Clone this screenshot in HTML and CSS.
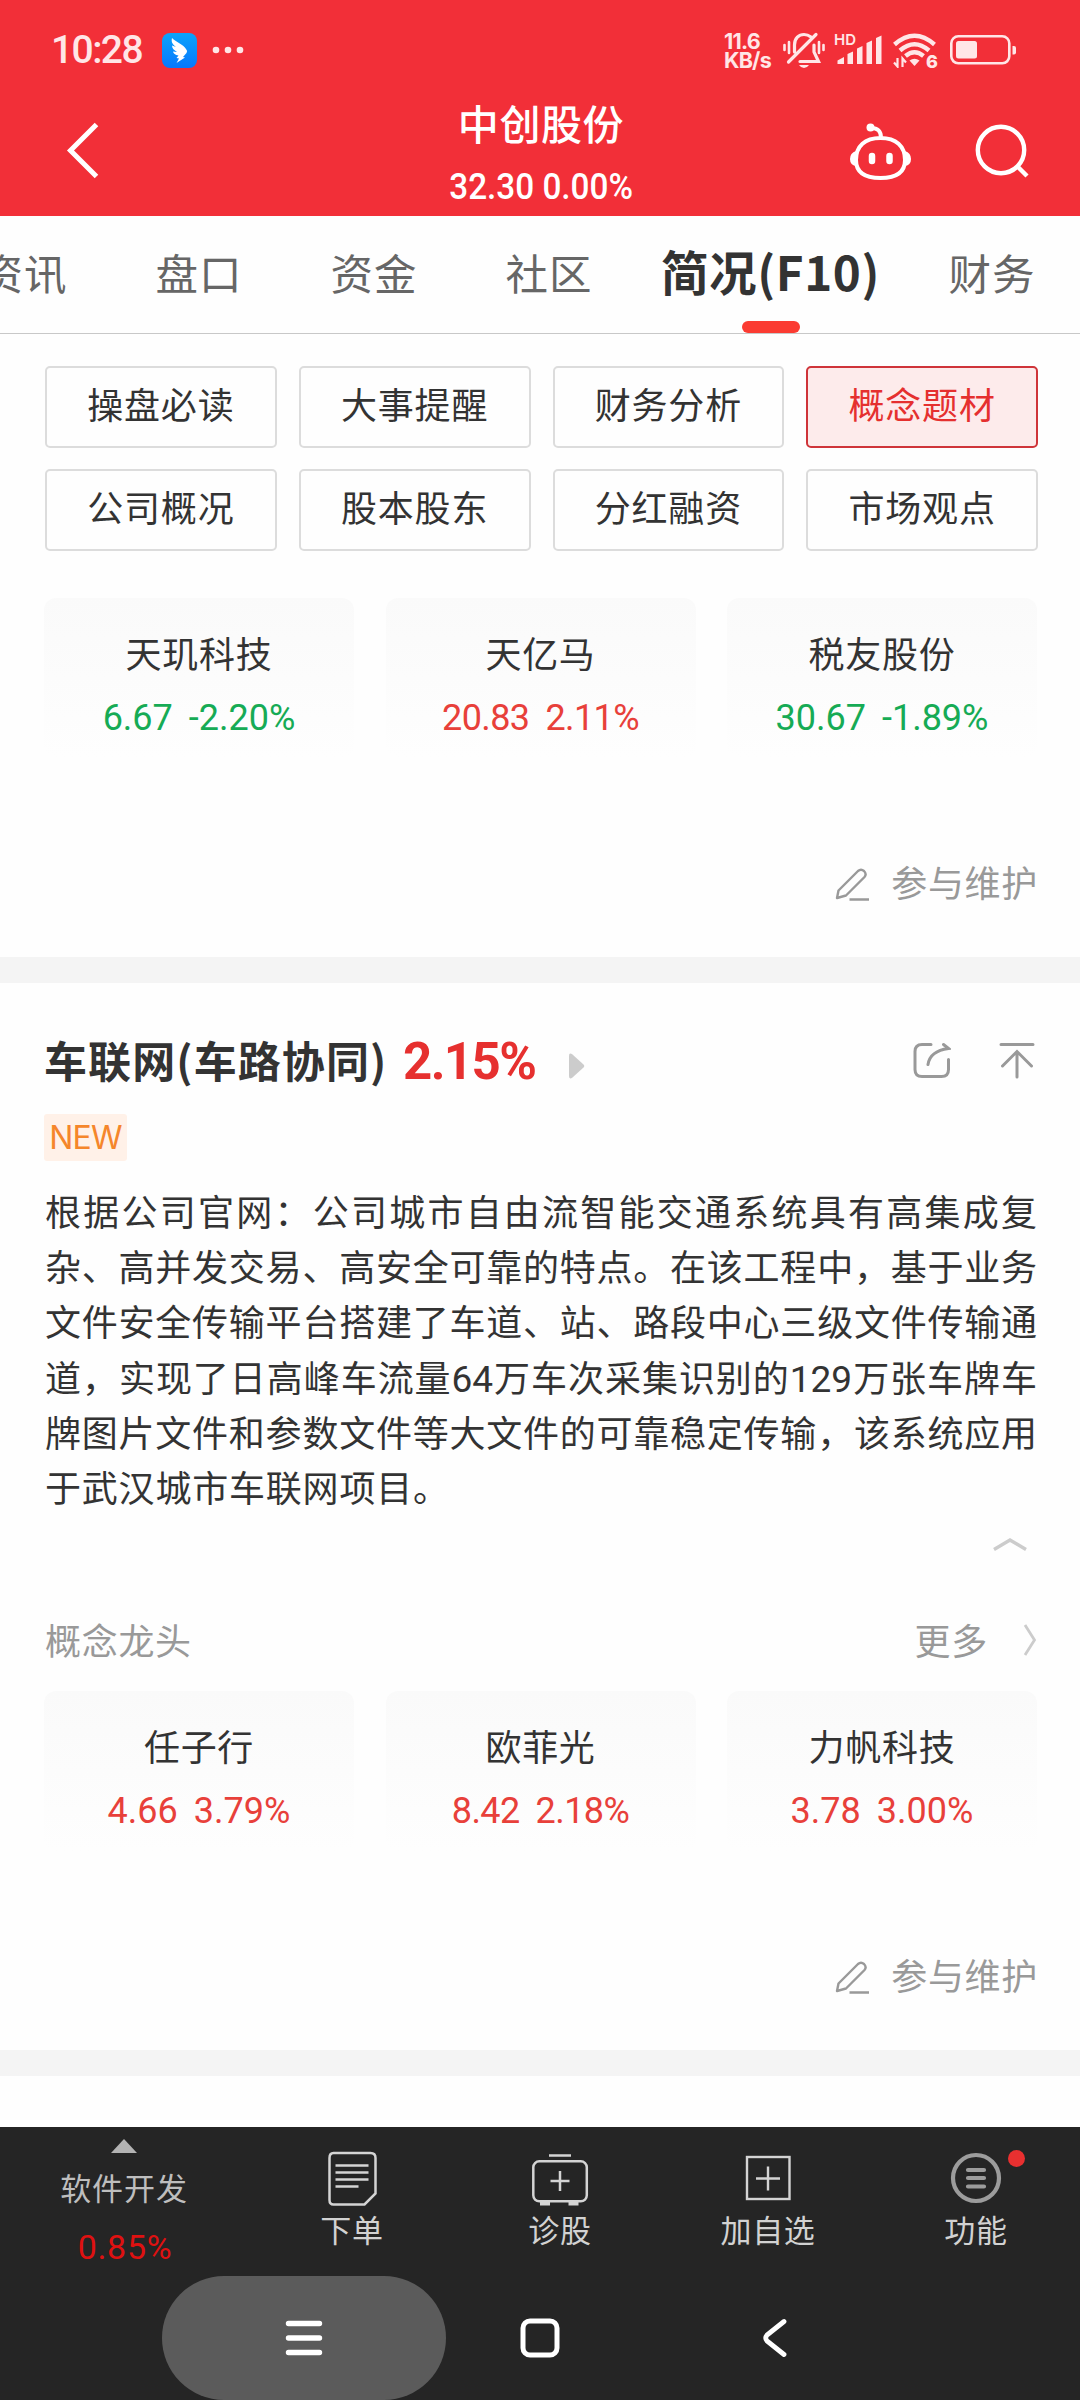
FILE: index.html
```html
<!DOCTYPE html>
<html lang="zh-CN">
<head>
<meta charset="utf-8">
<title>中创股份</title>
<link rel="stylesheet" href="styles.css">
</head>
<body>
<div class="app">
  <header class="header">
    <div class="status">
      <div class="status-left">
        <span class="clock">10:28</span>
        <svg class="app-icon" width="35" height="35" viewBox="0 0 35 35"><defs><linearGradient id="blue" x1="0" y1="0" x2="0" y2="1"><stop offset="0" stop-color="#0aa4fb"/><stop offset="1" stop-color="#0877fd"/></linearGradient></defs><rect width="35" height="35" rx="8" fill="url(#blue)"/><path d="M10 5C14 9 21 11 24 16Q26 18 24.500 20L21 24L23 24.500L14.500 30L17 25.500L14.500 25L16.500 22.500C13 22 11.500 20.500 11 18.500L15 19C12 17 10 15.500 10 12.500L14 14C10.500 11.500 9 9 10 5Z" fill="#fff"/></svg>
        <svg class="dots" width="32" height="8" viewBox="0 0 32 8" fill="#ffe6e7"><circle cx="4" cy="4" r="3.300"/><circle cx="16" cy="4" r="3.300"/><circle cx="28" cy="4" r="3.300"/></svg>
      </div>
      <div class="status-right">
        <div class="speed"><span>11.6</span><span>KB/s</span></div>
        <svg class="bell" width="42" height="36" viewBox="0 0 42 36" fill="none" stroke="#ffe6e7" stroke-width="3.200" stroke-linecap="round"><path d="M11.500 20V13C11.500 6 16 2.500 21 2.500C24 2.500 26 3.500 28 5M31 13V20L35.500 29.500H17M5.500 30L33 2.500"/><path d="M1.500 13V18M6 10V21M40.500 13V18M36 10V21" stroke-width="2.600"/><path d="M16 33H26Q24 36 21 36Q18 36 16 33Z" fill="#ffe6e7" stroke="none"/></svg>
        <div class="signal"><span class="hd">HD</span><svg width="46" height="30" viewBox="0 0 46 30" fill="#ffe6e7"><path d="M1.500 29V25.500L8 22V29ZM11.500 29V19L17 16.500V29ZM21 29V13.500L26.500 11V29ZM30.500 29V8L36 5.500V29ZM40 29V3L45.500 0.500V29Z"/></svg></div>
        <div class="wifi"><svg width="45" height="35" viewBox="0 0 45 35" fill="none" stroke="#ffe6e7" stroke-width="4.400"><path d="M1.500 11.500Q21.500 -6 41.500 11.500M7 17.500Q21.500 5 36 17.500M12.500 23Q21.500 15.500 30.500 23"/><path d="M16.500 27.500Q21.500 24 26.500 27.500L21.500 33Z" fill="#ffe6e7" stroke="none"/><path d="M4.500 25V33.500L1 29.500M9.500 34V25.500L13 29.500" stroke-width="2.200"/></svg><span class="wifi-gen">6</span></div>
        <svg class="battery" width="67" height="30" viewBox="0 0 67 30"><rect x="1.300" y="1.300" width="58" height="27" rx="7" fill="none" stroke="#ffe6e7" stroke-width="2.600"/><rect x="6" y="6" width="21" height="17.500" rx="2.500" fill="#ffe6e7"/><path d="M62.500 11H64Q66 11 66 13V17.500Q66 19.500 64 19.500H62.500Z" fill="#ffe6e7"/></svg>
      </div>
    </div>
    <div class="nav">
      <svg class="back" width="36" height="60" viewBox="0 0 36 60" fill="none" stroke="#fff" stroke-width="5"><path d="M31.500 4.500L5.500 30.500L31.500 56.500"/></svg>
      <div class="headline"><div class="name">中创股份</div><div class="price">32.30 0.00%</div></div>
      <div class="nav-icons">
        <svg width="62" height="58" viewBox="0 0 62 58" fill="none" stroke="#fff" stroke-width="4"><path d="M30.500 15C46 15 55 23 55 37C55 50 46 55 30.500 55C15 55 6 50 6 37C6 23 15 15 30.500 15ZM31 15C31 8 28 5 21 5"/><circle cx="20.500" cy="4.500" r="4" fill="#fff" stroke="none"/><path d="M6 28Q0 30 0 36Q0 42 6 43ZM55 28Q61 30 61 36Q61 42 55 43Z" fill="#fff" stroke="none"/><path d="M22 33V38M39.500 33V38" stroke-width="6.500" stroke-linecap="round"/></svg>
        <svg width="56" height="58" viewBox="0 0 56 58" fill="none" stroke="#fff" stroke-width="4.400"><circle cx="27" cy="28" r="23.200"/><path d="M44 45L53 54"/></svg>
      </div>
    </div>
  </header>

  <nav class="tabs">
    <span class="tab">资讯</span><span class="tab">盘口</span><span class="tab">资金</span><span class="tab">社区</span><span class="tab active">简况(F10)</span><span class="tab">财务</span>
  </nav>

  <main class="content">
    <div class="menu">
      <span>操盘必读</span><span>大事提醒</span><span>财务分析</span><span class="on">概念题材</span>
      <span>公司概况</span><span>股本股东</span><span>分红融资</span><span>市场观点</span>
    </div>
    <div class="cards">
      <div class="card"><div>天玑科技</div><div class="quote down">6.67<i></i>-2.20%</div></div>
      <div class="card"><div>天亿马</div><div class="quote up narrow">20.83<i></i>2.11%</div></div>
      <div class="card"><div>税友股份</div><div class="quote down">30.67<i></i>-1.89%</div></div>
    </div>
    <div class="edit"><svg width="34" height="34" viewBox="0 0 34 34" fill="none" stroke="#999" stroke-width="2.400" stroke-linejoin="round"><path d="M2 30L3.500 22.500L23 3Q26 0.500 29 3Q32 6 29.500 9L11 27.500ZM14.500 31.500H34"/></svg><span>参与维护</span></div>
    <div class="divider"></div>

    <section class="topic">
      <div class="topic-head">
        <h2>车联网(车路协同)</h2><strong>2.15%</strong>
        <svg class="play" width="16" height="26" viewBox="0 0 16 26"><path d="M0 3Q0 -1 3.500 1.500L14.500 11.500Q16 13 14.500 14.500L3.500 24.500Q0 27 0 23Z" fill="#ccc"/></svg>
        <div class="topic-tools">
          <svg width="38" height="38" viewBox="0 0 38 38" fill="none" stroke="#999" stroke-width="3" stroke-linecap="round"><path d="M18 2.500H9Q2 2.500 2 9.500V27.500Q2 34.500 9 34.500H28.500Q35.500 34.500 35.500 27.500V17.500M15 22.500Q17 9 35.500 6.500L30.500 2.500"/></svg>
          <svg width="36" height="38" viewBox="0 0 36 38" fill="none" stroke="#999" stroke-width="3" stroke-linecap="round"><path d="M2 2.500H34M18 35V9.500M3.500 24L18 9.500L32.500 24"/></svg>
        </div>
      </div>
      <span class="badge">NEW</span>
      <div class="para">
        <p>根据公司官网：公司城市自由流智能交通系统具有高集成复</p>
        <p>杂、高并发交易、高安全可靠的特点。在该工程中，基于业务</p>
        <p>文件安全传输平台搭建了车道、站、路段中心三级文件传输通</p>
        <p>道，实现了日高峰车流量<span class="num">64</span>万车次采集识别的<span class="num">129</span>万张车牌车</p>
        <p>牌图片文件和参数文件等大文件的可靠稳定传输，该系统应用</p>
        <p>于武汉城市车联网项目。</p>
      </div>
      <svg class="fold" width="34" height="14" viewBox="0 0 34 14" fill="none" stroke="#ccc" stroke-width="3.400"><path d="M1 12.500L17 3L33 12.500"/></svg>
      <div class="leaders"><span>概念龙头</span><span class="more">更多</span><svg width="14" height="34" viewBox="0 0 14 34" fill="none" stroke="#ccc" stroke-width="2.800"><path d="M2 2L11.500 17L2 32"/></svg></div>
      <div class="cards">
        <div class="card"><div>任子行</div><div class="quote up">4.66<i></i>3.79%</div></div>
        <div class="card"><div>欧菲光</div><div class="quote up narrow">8.42<i></i>2.18%</div></div>
        <div class="card"><div>力帆科技</div><div class="quote up">3.78<i></i>3.00%</div></div>
      </div>
      <div class="edit"><svg width="34" height="34" viewBox="0 0 34 34" fill="none" stroke="#999" stroke-width="2.400" stroke-linejoin="round"><path d="M2 30L3.500 22.500L23 3Q26 0.500 29 3Q32 6 29.500 9L11 27.500ZM14.500 31.500H34"/></svg><span>参与维护</span></div>
      <div class="divider"></div>
    </section>
  </main>

  <footer class="footer">
    <div class="actions">
      <div class="sector"><svg width="26" height="14" viewBox="0 0 26 14"><path d="M13 0L26 14H0Z" fill="#b3b3b3"/></svg><span>软件开发</span><b>0.85%</b></div>
      <div class="action"><svg width="60" height="60" viewBox="0 0 60 60" fill="none" stroke="#d4d4d4" stroke-width="2.500"><path d="M11.500 3H48.500Q53.500 3 53.500 8V43.500L42.500 54.500H11.500Q7.500 54.500 7.500 50V8Q7.500 3 11.500 3ZM13.500 15.500H46.500M13.500 22.500H46.500M13.500 29.500H46.500M13.500 36.500H36.500"/></svg><span>下单</span></div>
      <div class="action"><svg width="60" height="60" viewBox="0 0 60 60" fill="none" stroke="#d4d4d4" stroke-width="2.500"><rect x="3.300" y="11.300" width="53.500" height="40" rx="6"/><path d="M19 5.500H41M30 21V41M20.500 31H39.500"/><path d="M10 53.500H20M38.500 53.500H48.500" stroke-width="4"/></svg><span>诊股</span></div>
      <div class="action"><svg width="60" height="60" viewBox="0 0 60 60" fill="none" stroke="#d4d4d4" stroke-width="2.400"><rect x="9" y="7" width="42.500" height="42"/><path d="M30 16.500V40.500M18 28.500H42"/></svg><span>加自选</span></div>
      <div class="action"><svg width="60" height="60" viewBox="0 0 60 60" fill="none" stroke="#9c9c9c" stroke-width="4.200"><circle cx="30" cy="28" r="23"/><path d="M22 20H38M22 28H38M22 36.500H38" stroke-linecap="round"/></svg><i class="dot"></i><span>功能</span></div>
    </div>
    <div class="system">
      <div class="pill"><svg width="38" height="36" viewBox="0 0 38 36" stroke="#fff" stroke-width="5.400" stroke-linecap="round"><path d="M3.500 3.500H34.500M3.500 18H34.500M3.500 32.500H34.500"/></svg></div>
      <svg class="home" width="40" height="40" viewBox="0 0 40 40" fill="none" stroke="#fff" stroke-width="5"><rect x="3" y="3" width="34" height="34" rx="7"/></svg>
      <svg class="sysback" width="26" height="40" viewBox="0 0 26 40" fill="none" stroke="#fff" stroke-width="4.800" stroke-linecap="round"><path d="M22 3.500L5 17Q2.500 20 5 23L22 36.500"/></svg>
    </div>
  </footer>
</div>
</body>
</html>
```
FILE: styles.css
```css
* { box-sizing: border-box; }
body { margin: 0; background: #fefefe; }
.app {
  width: 1080px;
  height: 2400px;
  display: flex;
  flex-direction: column;
  overflow: hidden;
  font-family: Roboto, "Noto Sans CJK SC", sans-serif;
  font-size: 36px;
  color: #333;
  white-space: nowrap;
}
svg { display: block; flex: none; }

.header { height: 216px; background: #f22f38; color: #fff; flex: none; }
.status { height: 98px; display: flex; justify-content: space-between; padding: 32px 63px 0 51px; color: #ffe6e7; }
.status-left { display: flex; align-items: center; height: 36px; }
.clock { width: 111px; font-size: 39px; font-weight: 500; letter-spacing: -1.6px; line-height: 36px; }
.dots { margin-left: 15px; }
.status-right { display: flex; height: 36px; align-items: center; }
.speed { width: 59px; padding-top: 1px; font: 700 21.5px/19px Inter, sans-serif; display: flex; flex-direction: column; letter-spacing: -0.8px; }
.signal { width: 46px; height: 36px; margin-left: 11px; display: flex; flex-direction: column; justify-content: flex-end; position: relative; }
.signal svg { margin-bottom: 3px; }
.hd { position: absolute; left: -2px; top: 0; font: 600 15px/16px Inter, sans-serif; }
.wifi { position: relative; margin-left: 11px; }
.wifi-gen { position: absolute; right: 0; bottom: 0; font: 800 18px/13px Inter, sans-serif; background: #f22f38; }
.battery { margin-left: 12px; }

.nav { height: 118px; display: flex; justify-content: space-between; padding: 0 50px 0 65px; }
.back { margin-top: 22px; }
.headline { padding-left: 131px; text-align: center; }
.name { height: 53px; line-height: 56px; font-size: 41px; font-weight: 500; letter-spacing: 0.6px; }
.price { height: 50px; line-height: 71px; font-size: 37px; font-weight: 500; transform: scaleX(0.9); }
.nav-icons { display: flex; gap: 62px; padding-top: 25px; }
.nav-icons svg:last-child { margin-top: -1px; }

.tabs { height: 118px; flex: none; display: flex; margin-left: -63.5px; border-bottom: 1px solid #c8c8c8; }
.tab { width: 175px; flex: none; text-align: center; font-size: 42.5px; letter-spacing: 1px; line-height: 119px; color: #666; position: relative; }
.tab.active { width: 268px; font: 700 47.5px/110px "Noto Sans CJK SC", sans-serif; letter-spacing: 0.6px; color: #333; }
.tab.active::after { content: ""; position: absolute; left: 105px; bottom: 0; width: 58px; height: 12px; border-radius: 6px; background: #fb3b32; }

.content { height: 1793px; flex: none; }
.menu { padding: 32px 42px 0 45px; display: grid; grid-template-columns: repeat(4, 1fr); gap: 21px 22px; }
.menu span { height: 82px; border: 2px solid #dcdcdc; border-radius: 5px; text-align: center; letter-spacing: 0.8px; line-height: 79px; }
.menu .on { background: #fdebeb; border-color: #cf3439; color: #e5302f; }

.cards { display: grid; grid-template-columns: repeat(3, 310px); justify-content: space-between; padding: 0 43px 0 44px; margin-top: 47px; }
.card { height: 160px; border-radius: 12px; padding-top: 33px; background: linear-gradient(#fafafa, #fefefe); text-align: center; letter-spacing: 0.7px; line-height: 51px; }
.quote { margin-top: 11px; line-height: 50px; letter-spacing: 0; }
.quote.narrow { letter-spacing: -0.6px; }
.quote i { display: inline-block; width: 16px; }
.up { color: #e8403a; }
.down { color: #16ab55; }
.edit { margin-top: 99px; height: 54px; padding-right: 42px; display: flex; justify-content: flex-end; align-items: center; gap: 22px; color: #999; }
.edit svg { margin-top: 2px; }
.edit span { letter-spacing: 0.7px; line-height: 54px; padding-top: 2px; }
.divider { height: 26px; margin-top: 46px; background: #f4f4f4; }

.topic-head { height: 131px; padding: 0 45px 0 44px; display: flex; }
.topic-head h2 { width: 359px; margin: 0; font: 700 43px/153px "Noto Sans CJK SC", sans-serif; letter-spacing: 1.1px; }
.topic-head strong { width: 166px; line-height: 157px; font-size: 51px; font-weight: 700; color: #e6302f; letter-spacing: -1.6px; }
.play { margin-top: 70px; }
.topic-tools { display: flex; gap: 48px; margin: 59px 0 0 auto; }
.badge { display: block; width: 83px; height: 47px; margin-left: 44px; border-radius: 3px; background: #fff1e8; color: #f5862b; font: 400 32px/48px Inter, sans-serif; letter-spacing: -0.8px; text-align: center; }
.para { margin: 24px 43px 0 45px; }
.para p { margin: 0; height: 55.2px; line-height: 58px; text-align-last: justify; }
.para p:last-child { text-align-last: left; letter-spacing: 0.8px; }
.num { font-size: 37px; }
.fold { margin: 21px 0 0 993px; }
.leaders { height: 50px; margin: 63px 43px 0 45px; display: flex; align-items: center; color: #999; letter-spacing: 0.7px; }
.leaders svg { margin-top: 2px; }
.more { margin: 0 35px 0 auto; }
.leaders + .cards { margin-top: 27px; }

.footer { height: 273px; background: #252525; flex: none; color: #d2d2d2; font-size: 31px; }
.actions { height: 149px; display: flex; }
.sector { width: 248px; display: flex; flex-direction: column; align-items: center; padding-top: 12px; color: #bebebe; }
.sector span { height: 66px; line-height: 73px; letter-spacing: 0.9px; }
.sector b { font-size: 34px; font-weight: 400; line-height: 56px; color: #df1111; letter-spacing: 0.7px; padding-left: 2px; }
.action { width: 208px; display: flex; flex-direction: column; align-items: center; padding-top: 23px; position: relative; }
.action span { line-height: 43px; letter-spacing: 0.7px; }
.dot { position: absolute; left: 136px; top: 23px; width: 17px; height: 17px; border-radius: 50%; background: #e93030; }
.system { height: 124px; display: flex; align-items: center; padding-left: 162px; }
.pill { width: 284px; height: 124px; border-radius: 62px; background: #5b5b5b; display: flex; align-items: center; justify-content: center; }
.home { margin-left: 74px; }
.sysback { margin-left: 202px; }
```
